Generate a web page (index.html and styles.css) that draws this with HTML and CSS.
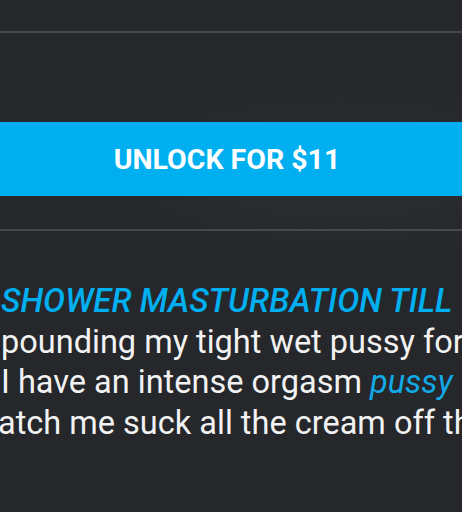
FILE: index.html
```html
<!DOCTYPE html>
<html lang="en">

<head>
	<meta charset="UTF-8">
	<title>Post</title>
	<link rel="stylesheet" href="styles.css">
</head>

<body>
<div class="post">
	<div class="post-top"></div>
	<div class="locked">
		<button class="unlock">UNLOCK FOR $11</button>
	</div>
	<div class="caption">
		<div class="line title">SHOWER MASTURBATION TILL</div>
		<div class="line">pounding my tight wet pussy for</div>
		<div class="line">I have an intense orgasm <em>pussy</em></div>
		<div class="line cut">atch me suck all the cream off th</div>
	</div>
</div>
</body>

</html>
```

FILE: styles.css
```css
* {
	padding: 0;
	margin: 0;
	border: 0;
	box-sizing: border-box;
}

body {
	width: 462px;
	height: 512px;
	overflow: hidden;
	background: #25272a radial-gradient(ellipse 260px 90px at 340px 170px, #2d2f32, #25272a);
	font-family: Roboto, "Noto Sans", sans-serif;
}

.post-top {
	height: 33px;
	border-bottom: 2px solid #46484b;
}

.locked {
	padding: 89px 0 33px;
	border-bottom: 2px solid #46484b;
}

.unlock {
	display: block;
	width: 100%;
	height: 74px;
	padding-right: 8px;
	background: #00aff0;
	color: #fff;
	font-family: Roboto, sans-serif;
	font-weight: bold;
	font-size: 28.5px;
}

.caption {
	overflow: hidden;
	padding-top: 50px;
	font-size: 32.5px;
	line-height: 40.5px;
	color: #f2f2f2;
}

.line {
	white-space: nowrap;
	padding-left: 1px;
}

.title {
	color: #00aff0;
	font-size: 33px;
	font-style: italic;
	font-weight: 500;
}

.caption em {
	color: #12aae6;
}

.cut {
	margin-left: -3px;
}
```
